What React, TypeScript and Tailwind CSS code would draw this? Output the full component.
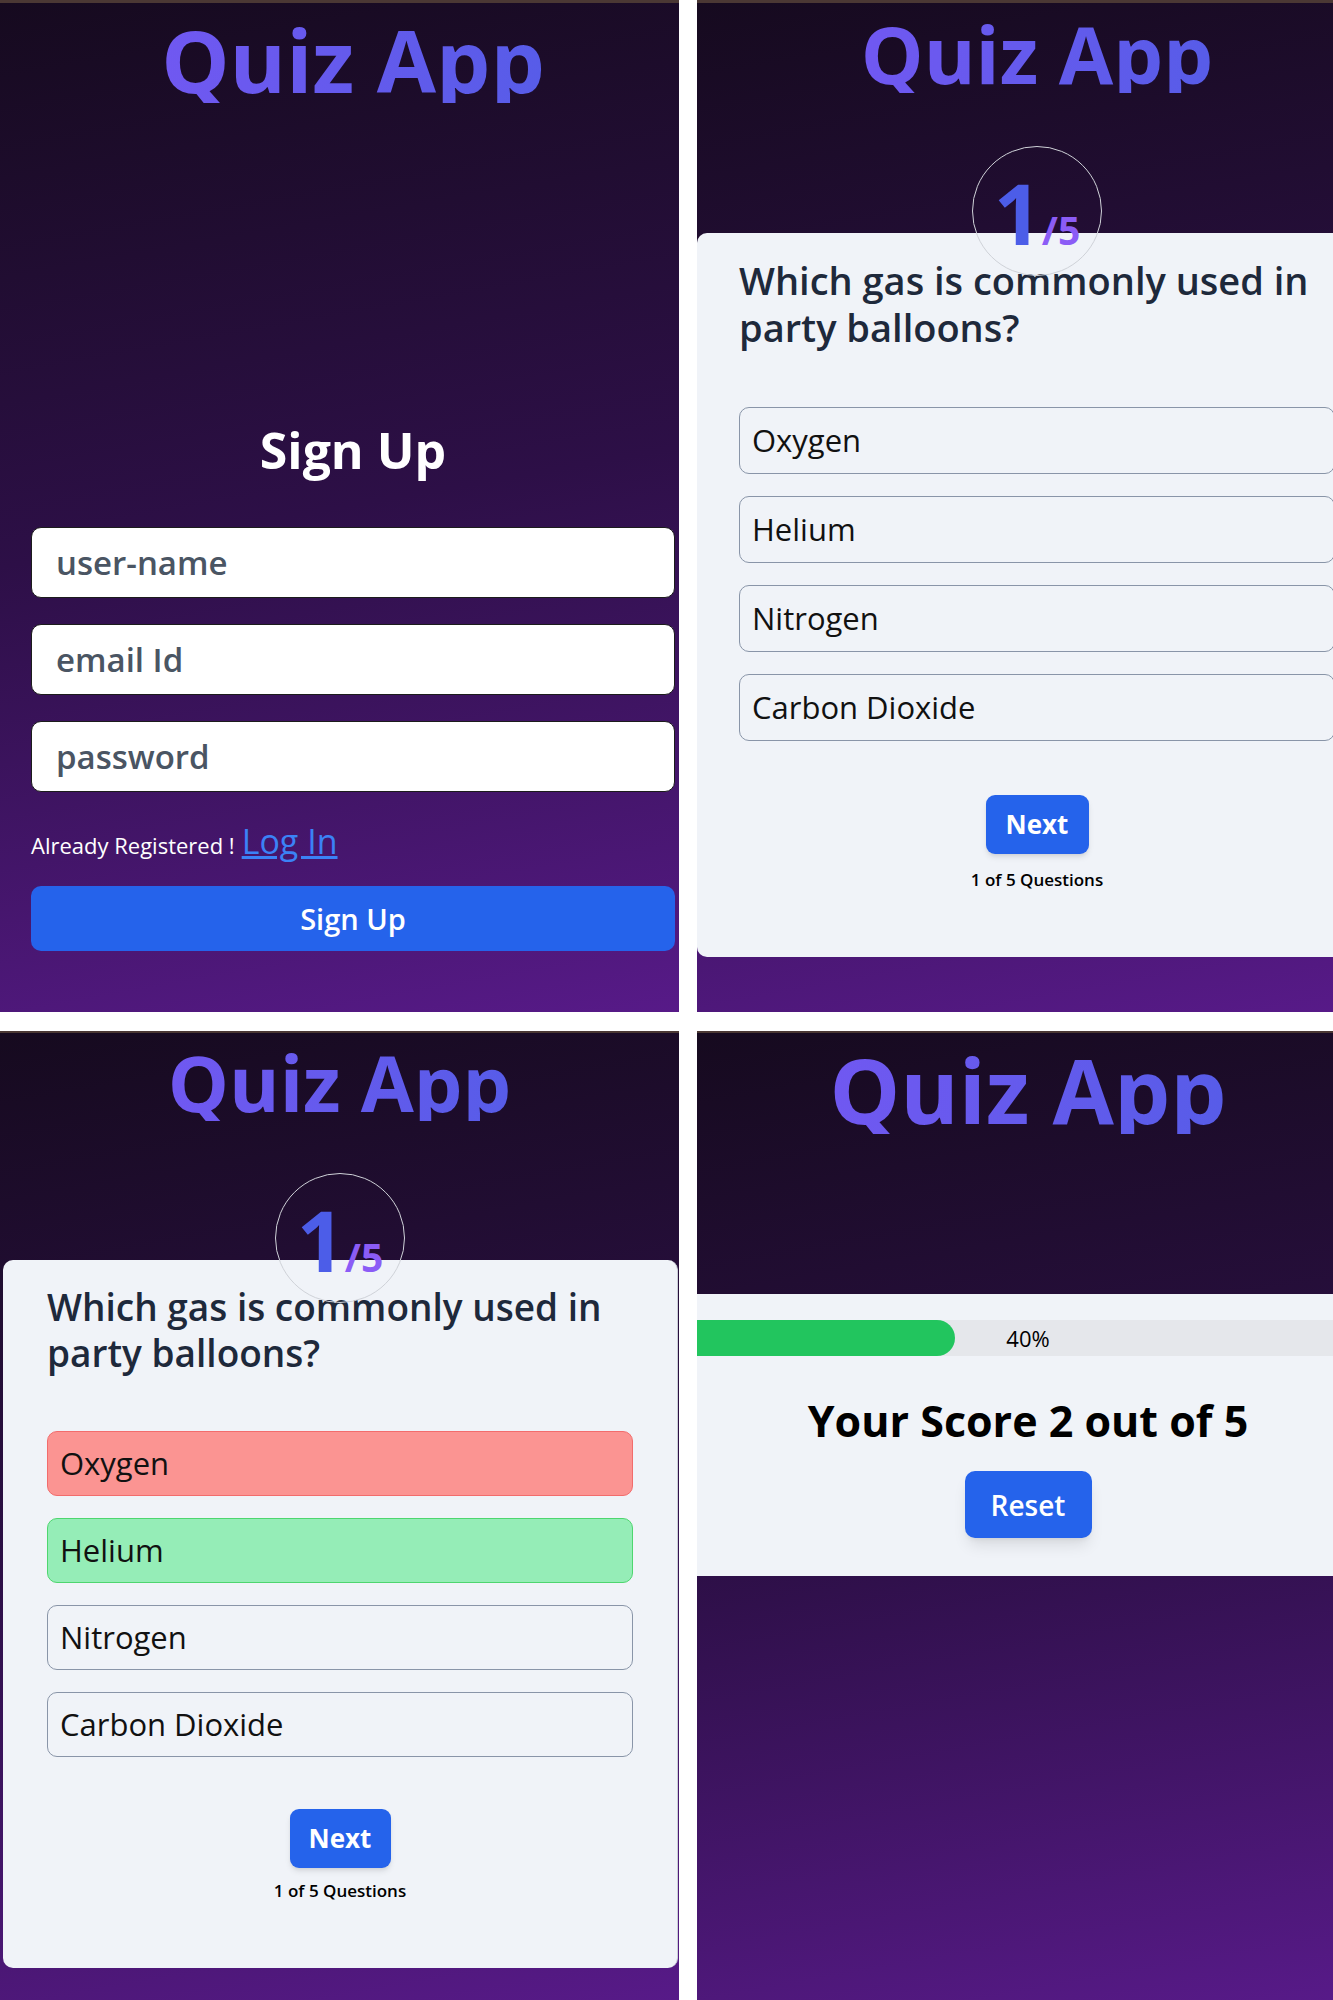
import React from "react";

const options = ["Oxygen", "Helium", "Nitrogen", "Carbon Dioxide"];

function Title({ size }: { size: string }) {
  return (
    <div className="flex justify-center">
      <h1
        className={`bg-linear-to-r from-[#7058f1] to-[#575ce8] bg-clip-text font-bold leading-none text-transparent ${size}`}
      >
        Quiz App
      </h1>
    </div>
  );
}

function Counter() {
  return (
    <div className="absolute -top-[87px] left-1/2 h-[130px] w-[130px] -translate-x-1/2 rounded-full border border-[#cfd2d8]">
      <div className="flex items-baseline justify-center pt-[24px] font-bold leading-none">
        <span className="text-[84px] text-[#4c5de8]">1</span>
        <span className="text-[39px] text-[#8b5cf6]">/5</span>
      </div>
    </div>
  );
}

function Option({ label, tone, h }: { label: string; tone?: "wrong" | "right"; h: string }) {
  const color =
    tone === "wrong"
      ? "bg-[#fb9492] border-[#f26c6c]"
      : tone === "right"
        ? "bg-[#95edb7] border-[#4ed66f]"
        : "bg-[#f0f3f8] border-[#8995a8]";
  return (
    <div className={`flex items-center rounded-[10px] border-[1.5px] px-[12px] text-[31px] text-[#111] ${h} ${color}`}>
      {label}
    </div>
  );
}

function SignUpPanel() {
  return (
    <div className="h-[1012px] overflow-hidden border-t-[3px] border-[#4b3834] bg-linear-170 from-[#160a1f] via-[#2d0f47] to-[#571a88]">
      <div className="w-[706px] px-[31px]">
        <div className="mt-[14px]">
          <Title size="text-[86px]" />
        </div>
        <h2 className="mt-[322px] text-center text-[50px] font-bold leading-none text-white">Sign Up</h2>
        <div className="mt-[52px] flex flex-col gap-[26px]">
          {["user-name", "email Id", "password"].map((p) => (
            <input
              key={p}
              readOnly
              placeholder={p}
              className="h-[71px] w-full rounded-[10px] border-[1.5px] border-[#1c1c1c] bg-white px-[24px] text-[33px] font-semibold placeholder:text-[#4a5563]"
            />
          ))}
        </div>
        <div className="mt-[32px] flex items-baseline gap-[7px] leading-none text-white">
          <span className="text-[22px]">Already Registered !</span>
          <a className="text-[34px] text-[#3b82f6] underline">Log In</a>
        </div>
        <button className="mt-[28px] h-[65px] w-full rounded-[10px] bg-[#2563eb] text-[29px] font-semibold text-white">
          Sign Up
        </button>
      </div>
    </div>
  );
}

function QuestionPanel() {
  return (
    <div className="h-[1012px] overflow-hidden border-t-[3px] border-[#4b3834] bg-linear-170 from-[#160a1f] via-[#2d0f47] to-[#571a88]">
      <div className="w-[680px]">
        <div className="mt-[11px]">
          <Title size="text-[79px]" />
        </div>
        <div className="relative mt-[140px] rounded-[10px] bg-[#f0f3f8] px-[42px] pb-[69px] pt-[24px]">
          <Counter />
          <p className="text-[38px] font-semibold leading-[47px] text-[#1e293b]">
            Which gas is commonly used in party balloons?
          </p>
          <div className="mt-[56px] flex flex-col gap-[22px]">
            {options.map((o) => (
              <Option key={o} label={o} h="h-[67px]" />
            ))}
          </div>
          <button className="mx-auto mt-[54px] block h-[59px] w-[103px] rounded-[9px] bg-[#2563eb] text-[26px] font-bold text-white shadow-md">
            Next
          </button>
          <p className="mt-[17px] text-center text-[17px] font-semibold leading-none text-black">1 of 5 Questions</p>
        </div>
      </div>
    </div>
  );
}

function AnsweredPanel() {
  return (
    <div className="h-[969px] overflow-hidden border-t-2 border-[#4b3834] bg-linear-170 from-[#160a1f] via-[#2d0f47] to-[#571a88]">
      <div className="w-[679px]">
        <div className="mt-[11px]">
          <Title size="text-[77px]" />
        </div>
        <div className="relative ml-[3px] mr-[1px] mt-[139px] rounded-[10px] border-r border-[#c9ccd6] bg-[#f0f3f8] px-[44px] pb-[69px] pt-[24px]">
          <Counter />
          <p className="text-[37px] font-semibold leading-[46px] text-[#1e293b]">
            Which gas is commonly used in party balloons?
          </p>
          <div className="mt-[55px] flex flex-col gap-[22px]">
            {options.map((o, i) => (
              <Option key={o} label={o} h="h-[65px]" tone={i === 0 ? "wrong" : i === 1 ? "right" : undefined} />
            ))}
          </div>
          <button className="mx-auto mt-[52px] block h-[59px] w-[101px] rounded-[9px] bg-[#2563eb] text-[26px] font-bold text-white shadow-md">
            Next
          </button>
          <p className="mt-[14px] text-center text-[17px] font-semibold leading-none text-black">1 of 5 Questions</p>
        </div>
      </div>
    </div>
  );
}

function ResultPanel() {
  return (
    <div className="h-[969px] overflow-hidden border-t-2 border-[#4b3834] bg-linear-170 from-[#160a1f] via-[#2d0f47] to-[#571a88]">
      <div className="w-[662px]">
        <div className="mt-[12px]">
          <Title size="text-[89px]" />
        </div>
      </div>
      <div className="mt-[160px] bg-[#f0f3f8] pb-[38px] pt-[26px]">
        <div className="w-[662px]">
          <div className="relative h-[36px] w-full bg-[#e5e7eb]">
            <div className="h-full w-[258px] rounded-r-full bg-[#22c55e]" />
            <span className="absolute inset-0 flex items-center justify-center text-[22px] font-medium text-black">40%</span>
          </div>
          <h2 className="mt-[43px] text-center text-[43px] font-bold leading-none text-black">Your Score 2 out of 5</h2>
          <button className="mx-auto mt-[29px] block h-[67px] w-[127px] rounded-[10px] bg-[#2563eb] text-[28px] font-semibold text-white shadow-lg">
            Reset
          </button>
        </div>
      </div>
    </div>
  );
}

export default function App() {
  return (
    <div className="grid h-[2000px] w-[1333px] grid-cols-[679px_636px] grid-rows-[1012px_969px] gap-x-[18px] gap-y-[19px] bg-white font-['Open_Sans',sans-serif]">
      <SignUpPanel />
      <QuestionPanel />
      <AnsweredPanel />
      <ResultPanel />
    </div>
  );
}
